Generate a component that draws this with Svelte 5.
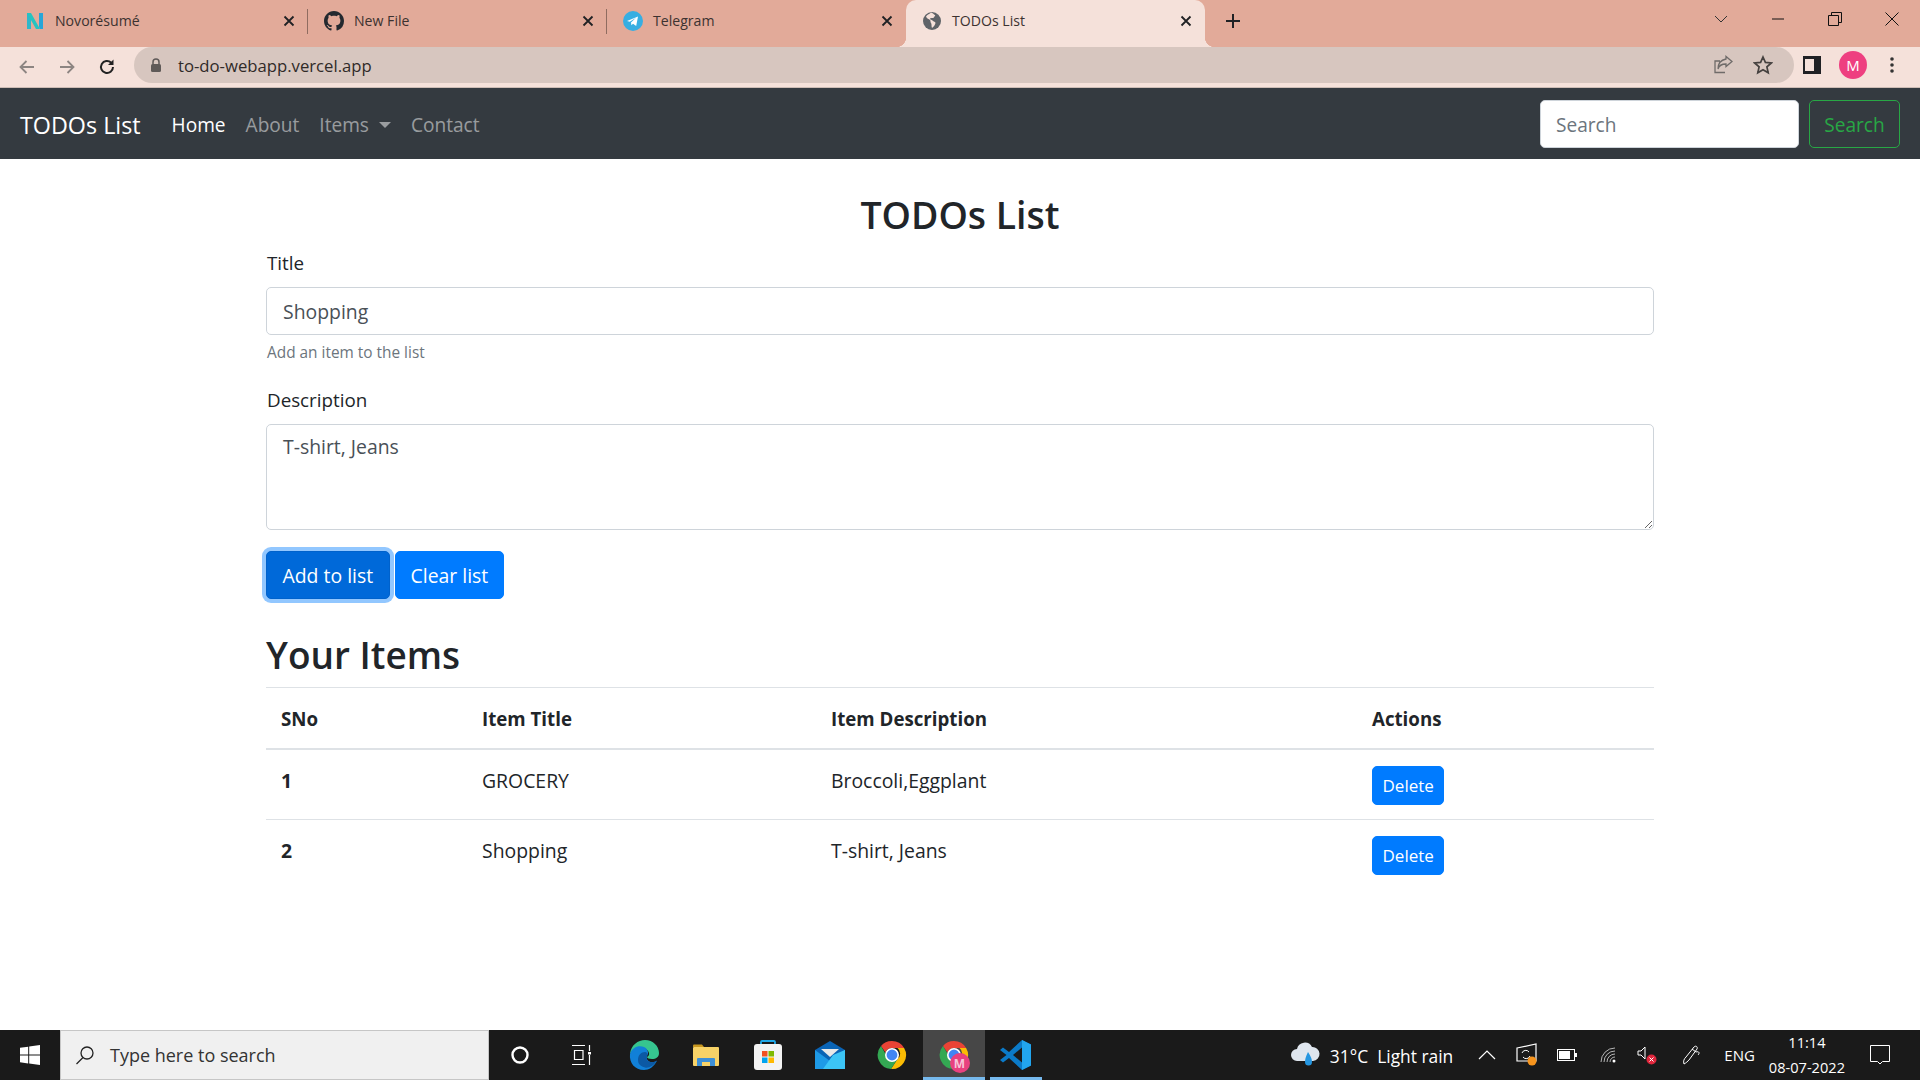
<script>
  const tabs = [
    { id: 'novo', title: 'Novorésumé' },
    { id: 'github', title: 'New File' },
    { id: 'telegram', title: 'Telegram' },
    { id: 'globe', title: 'TODOs List', active: true }
  ];
  const links = ['About'];
  const items = [
    { no: 1, title: 'GROCERY', desc: 'Broccoli,Eggplant' },
    { no: 2, title: 'Shopping', desc: 'T-shirt, Jeans' }
  ];
</script>

{#snippet chromeLogo()}
  <svg viewBox="0 0 32 32" width="32" height="32">
    <path d="M16 2a14 14 0 0 1 12.100 7H16a7 7 0 0 0-6.600 4.600L5 7A14 14 0 0 1 16 2z" fill="#ea4335" />
    <path d="M28.100 9A14 14 0 0 1 15 30l6.500-10a7 7 0 0 0 0-11z" fill="#fbbc04" />
    <path d="M5 7l6 10.500A7 7 0 0 0 21.500 20L15 30A14 14 0 0 1 5 7z" fill="#34a853" />
    <circle cx="16" cy="16" r="6.200" fill="#4285f4" stroke="#fff" stroke-width="1.600" />
  </svg>
{/snippet}

<div class="screen">
  <div class="tabstrip">
    {#each tabs as tab, i}
      <div class="tab" class:active={tab.active} class:sep={i < 2}>
        <span class="favicon">
          {#if tab.id === 'novo'}
            <svg viewBox="0 0 20 20" width="20" height="20"><path d="M2 2l4 0 0 16-4 0z" fill="#2fb7c9" /><path d="M2 2l4 0 9 16-4 0z" fill="#25c4c0" /><path d="M14 2l4 0 0 16-3 0-1-2z" fill="#27a6d8" /></svg>
          {:else if tab.id === 'github'}
            <svg viewBox="0 0 16 16" width="20" height="20"><path fill="#24292f" d="M8 0C3.580 0 0 3.580 0 8c0 3.540 2.290 6.530 5.470 7.590.4.070.55-.17.55-.38 0-.19-.01-.82-.01-1.490-2.010.37-2.530-.49-2.690-.94-.09-.23-.48-.94-.82-1.130-.28-.15-.68-.52-.01-.53.63-.01 1.080.58 1.230.82.72 1.210 1.870.87 2.330.66.070-.52.28-.87.51-1.070-1.780-.2-3.640-.89-3.640-3.950 0-.87.31-1.590.82-2.150-.08-.2-.36-1.020.08-2.120 0 0 .67-.21 2.200.82.64-.18 1.320-.27 2-.27s1.360.09 2 .27c1.530-1.040 2.200-.82 2.200-.82.44 1.100.16 1.920.08 2.120.51.56.82 1.270.82 2.150 0 3.070-1.870 3.750-3.650 3.950.29.25.54.73.54 1.480 0 1.070-.01 1.930-.01 2.200 0 .21.15.46.55.38A8 8 0 0 0 16 8c0-4.420-3.580-8-8-8z" /></svg>
          {:else if tab.id === 'telegram'}
            <svg viewBox="0 0 20 20" width="20" height="20"><circle cx="10" cy="10" r="10" fill="#37aee2" /><path d="M4 10l11-4.500-1.800 9.500-3.200-2.300-1.600 1.600-.4-2.900 5-4.600-6.200 3.900z" fill="#fff" /></svg>
          {:else}
            <svg viewBox="0 0 20 20" width="20" height="20"><circle cx="10" cy="10" r="9" fill="#5f6368" /><path d="M9 1.500c-1 1.500-4 2-5 4 .5 2 3 2.500 4 3.500s0 2 1 3 0 3 1 5c1.500-1 3-3 3.500-5 .2-1-2-1.500-3-2.500s-2-.5-2.500-1.500 2-1 3-1 1-1.500 2-2-1-2-4-3.500z" fill="#f5e1da" /></svg>
          {/if}
        </span>
        <span class="tab-title">{tab.title}</span>
        <svg class="tab-close" viewBox="0 0 12 12" width="12" height="12"><path d="M1.500 1.500l9 9M10.500 1.500l-9 9" stroke="#202124" stroke-width="1.800" /></svg>
      </div>
    {/each}
    <svg class="newtab" viewBox="0 0 16 16" width="16" height="16"><path d="M8 1v14M1 8h14" stroke="#202124" stroke-width="2" /></svg>
    <div class="winbtns">
      <svg viewBox="0 0 14 14" width="14" height="14"><path d="M1 4l6 6 6-6" fill="none" stroke="#333" stroke-width="1" /></svg>
      <svg viewBox="0 0 14 14" width="14" height="14"><path d="M1 7h12" stroke="#111" stroke-width="1" /></svg>
      <svg viewBox="0 0 14 14" width="14" height="14"><path d="M.5 3.500h10v10H.5zM3.500 3.500V.5h10v10h-3" fill="none" stroke="#111" stroke-width="1" /></svg>
      <svg viewBox="0 0 14 14" width="14" height="14"><path d="M.5.5l13 13M13.500.5l-13 13" stroke="#111" stroke-width="1" /></svg>
    </div>
  </div>

  <div class="toolbar">
    <svg class="tool" viewBox="0 0 18 18" width="18" height="18"><path d="M16 9H3M8.500 3L2.500 9l6 6" fill="none" stroke="#8d8582" stroke-width="1.800" /></svg>
    <svg class="tool" viewBox="0 0 18 18" width="18" height="18"><path d="M2 9h13M9.500 3l6 6-6 6" fill="none" stroke="#8d8582" stroke-width="1.800" /></svg>
    <svg class="tool" viewBox="0 0 18 18" width="18" height="18"><path d="M15 9a6 6 0 1 1-1.800-4.300" fill="none" stroke="#222" stroke-width="2" /><path d="M15.500 1.500v5.500H10z" fill="#222" /></svg>
    <div class="omnibox">
      <svg viewBox="0 0 12 14" width="12" height="14"><path d="M3 6V4a3 3 0 0 1 6 0v2" fill="none" stroke="#5f5a58" stroke-width="1.500" /><rect x="1" y="6" width="10" height="8" rx="1.500" fill="#5f5a58" /></svg>
      <span class="url">to-do-webapp.vercel.app</span>
      <svg class="share" viewBox="0 0 20 20" width="20" height="20"><path d="M13 4v-2.500l6 5-6 5V9c-4 0-7 1.500-8 5 0-5 3-9 8-10zM12 17.500H2V6h5" fill="none" stroke="#6f6b69" stroke-width="1.300" /></svg>
      <svg class="star" viewBox="0 0 20 20" width="20" height="20"><path d="M10 2l2.400 5.400 5.900.6-4.400 3.900 1.300 5.800L10 14.700l-5.200 3 1.300-5.800L1.700 8l5.900-.6z" fill="none" stroke="#45413f" stroke-width="1.700" /></svg>
    </div>
    <svg class="side" viewBox="0 0 18 18" width="18" height="18"><rect width="18" height="18" fill="#202124" /><rect x="2" y="3" width="9" height="12" fill="#f5e1da" /></svg>
    <span class="avatar">M</span>
    <svg class="menu" viewBox="0 0 4 18" width="4" height="18"><circle cx="2" cy="3" r="1.800" fill="#333" /><circle cx="2" cy="9" r="1.800" fill="#333" /><circle cx="2" cy="15" r="1.800" fill="#333" /></svg>
  </div>

  <nav class="navbar">
    <span class="brand">TODOs List</span>
    <span class="nav-link current">Home</span>
    {#each links as link}
      <span class="nav-link">{link}</span>
    {/each}
    <span class="nav-link">Items<i class="caret"></i></span>
    <span class="nav-link">Contact</span>
    <form class="nav-search">
      <input class="search-input" placeholder="Search" />
      <button type="button" class="btn-outline">Search</button>
    </form>
  </nav>

  <main class="container">
    <h2 class="page-title">TODOs List</h2>
    <label class="label" for="title">Title</label>
    <input id="title" class="control" value="Shopping" />
    <small class="hint">Add an item to the list</small>
    <label class="label desc-label" for="desc">Description</label>
    <textarea id="desc" class="control area" value="T-shirt, Jeans"></textarea>
    <div class="actions">
      <button type="button" class="btn focus">Add to list</button>
      <button type="button" class="btn">Clear list</button>
    </div>
    <h2 class="items-title">Your Items</h2>
    <table>
      <thead>
        <tr><th class="c1">SNo</th><th class="c2">Item Title</th><th class="c3">Item Description</th><th>Actions</th></tr>
      </thead>
      <tbody>
        {#each items as item}
          <tr>
            <th>{item.no}</th>
            <td>{item.title}</td>
            <td>{item.desc}</td>
            <td><button type="button" class="btn small">Delete</button></td>
          </tr>
        {/each}
      </tbody>
    </table>
  </main>

  <footer class="taskbar">
    <div class="start">
      <svg viewBox="0 0 20 20" width="20" height="20"><path d="M0 2.800l8.200-1.100v7.900H0zM9.200 1.500L20 0v9.600H9.200zM0 10.500h8.200v7.900L0 17.200zM9.200 10.500H20V20L9.200 18.500z" fill="#fff" /></svg>
    </div>
    <div class="task-search">
      <svg viewBox="0 0 20 20" width="20" height="20"><circle cx="12" cy="8" r="6" fill="none" stroke="#222" stroke-width="1.300" /><path d="M8 12.500L1.500 19" stroke="#222" stroke-width="1.300" /></svg>
      <span>Type here to search</span>
    </div>
    <div class="slot">
      <svg viewBox="0 0 20 20" width="20" height="20"><circle cx="10" cy="10" r="7.500" fill="none" stroke="#fff" stroke-width="2.400" /></svg>
    </div>
    <div class="slot">
      <svg viewBox="0 0 22 22" width="22" height="22"><path d="M1 1.500h13M1 20.500h13M3.500 6.500h8.500v9H3.500zM18.500 1v6M18.500 11v10" fill="none" stroke="#fff" stroke-width="1.200" /><rect x="17" y="8" width="3" height="2.500" fill="#fff" /></svg>
    </div>
    <div class="slot">
      <svg viewBox="0 0 32 32" width="32" height="32">
        <path d="M2 15C3 6 10 1 17 1c8 0 14 6 14 13 0 4-3 6-7 6-3 0-5-1-5-2 2-1 3-3 1-6C17 7 8 6 2 15z" fill="#36c58f" />
        <path d="M2 15C4 8 11 6 16 8c4 2 5 6 3 9-1 2 0 4 2 5.500 3 1.500 6 .5 8-1C26 28 21 31 16 31 7 31 1 24 2 15z" fill="#1180d8" />
        <path d="M10 21c0-5 3-8 7-8 2 0 3 2 2 4-1 3 0 5 2 5.500 3 1.500 6 .5 8-1-3 5-8 8-12 7-4-1-7-3-7-7.500z" fill="#0c59a4" />
      </svg>
    </div>
    <div class="slot">
      <svg viewBox="0 0 28 24" width="28" height="24"><path d="M1 2.500q0-1 1-1h8l2 2.500h-11z" fill="#c8971f" /><rect x="1" y="4" width="26" height="19" rx="1" fill="#f7d267" /><path d="M5 23v-7q0-1 1-1h16q1 0 1 1v7h-5v-4h-8v4z" fill="#3d8fd6" /></svg>
    </div>
    <div class="slot">
      <svg viewBox="0 0 30 32" width="30" height="32"><path d="M8 7V3q0-1 1-1h12q1 0 1 1v4" fill="none" stroke="#1fa8e8" stroke-width="1.800" /><rect x="1" y="5" width="28" height="26" rx="3" fill="#f3f3f3" /><rect x="9" y="12" width="5.500" height="5.500" fill="#f25022" /><rect x="15.500" y="12" width="5.500" height="5.500" fill="#7fba00" /><rect x="9" y="18.500" width="5.500" height="5.500" fill="#00a4ef" /><rect x="15.500" y="18.500" width="5.500" height="5.500" fill="#ffb900" /></svg>
    </div>
    <div class="slot">
      <svg viewBox="0 0 30 28" width="30" height="28"><path d="M0 9L15 0l15 9v19H0z" fill="#0a64b5" /><path d="M6 8h18l-9 8z" fill="#e8e8e8" /><path d="M0 9l15 11L30 9v19H0z" fill="#1e9ae6" /><path d="M30 9v19H8l10-14z" fill="#3cc5f6" /></svg>
    </div>
    <div class="slot">{@render chromeLogo()}</div>
    <div class="slot running">
      {@render chromeLogo()}
      <span class="badge">M</span>
    </div>
    <div class="slot underlined">
      <svg viewBox="0 0 32 32" width="32" height="32"><path d="M22 1l9 4.500v21L22 31 9 19l-6 4.500L0 21l6.500-5L0 11l3-2.500L9 13z" fill="#0b7ac8" /><path d="M22 1l9 4.500v21L22 31z" fill="#22a5ee" /><path d="M22 8.500L13 16l9 7.500z" fill="#1a1a1a" /></svg>
    </div>
    <div class="tray">
      <svg class="cloud" viewBox="0 0 30 30" width="30" height="30"><path d="M7 21a6 6 0 0 1 0-12 8 8 0 0 1 15-2 7 7 0 0 1 1 14z" fill="#dfe6ee" /><path d="M18 12q4 6 4 10a3.500 3.500 0 0 1-7 0q0-4 3-10z" fill="#2596e0" /></svg>
      <span class="weather">31°C&nbsp; Light rain</span>
      <svg class="t-chev" viewBox="0 0 18 10" width="18" height="10"><path d="M1 9l8-8 8 8" fill="none" stroke="#fff" stroke-width="1.200" /></svg>
      <svg class="t-sync" viewBox="0 0 22 24" width="22" height="24"><path d="M1 5l19-4v17H1z" fill="none" stroke="#fff" stroke-width="1.200" /><path d="M6 10a4 4 0 0 1 7-1M14 13a4 4 0 0 1-7 1" fill="none" stroke="#fff" /><circle cx="16" cy="18" r="4.500" fill="#f7941d" /></svg>
      <svg class="t-batt" viewBox="0 0 20 12" width="20" height="12"><rect x=".5" y=".5" width="17" height="11" fill="none" stroke="#fff" /><rect x="2" y="2" width="11" height="8" fill="#fff" /><rect x="18" y="4" width="2" height="4" fill="#fff" /></svg>
      <svg class="t-wifi" viewBox="0 0 16 16" width="16" height="16"><path d="M1 15A14 14 0 0 1 15 1M4 15A11 11 0 0 1 15 4M7 15a8 8 0 0 1 8-8M10 15a5 5 0 0 1 5-5" fill="none" stroke="#ddd" stroke-width=".8" /><circle cx="14" cy="14" r="1.500" fill="#fff" /></svg>
      <svg class="t-vol" viewBox="0 0 20 20" width="20" height="20"><path d="M1 6h3l4-4v12l-4-4H1z" fill="none" stroke="#fff" /><circle cx="14.500" cy="14.500" r="5" fill="#e0263c" /><path d="M12.500 12.500l4 4M16.500 12.500l-4 4" stroke="#fff" /></svg>
      <svg class="t-pen" viewBox="0 0 20 22" width="20" height="22"><path d="M2 20c-1-3 0-5 2-7l8-10c2-2 4 0 3 2l-8 11c-1 1-3 3-5 4zM10 5l4 3c3-1 4 1 2 3" fill="none" stroke="#fff" stroke-width="1" /></svg>
      <span class="lang">ENG</span>
      <span class="clock"><span>11:14</span><span>08-07-2022</span></span>
      <svg class="t-note" viewBox="0 0 20 20" width="20" height="20"><path d="M.5.5h19v16h-7l-2.500 2.500-2.500-2.500h-7z" fill="none" stroke="#fff" /></svg>
    </div>
  </footer>
</div>

<style>
  :global(body) {
    margin: 0;
    background: #fff;
  }

  .screen {
    width: 1920px;
    height: 1080px;
    overflow: hidden;
    display: flex;
    flex-direction: column;
    font-family: "Open Sans", "Noto Sans", sans-serif;
    color: #212529;
  }

  /* browser chrome */
  .tabstrip {
    flex: 0 0 47px;
    background: #e2aa99;
    display: flex;
    align-items: stretch;
    padding-left: 9px;
  }

  .tab {
    width: 299px;
    box-sizing: border-box;
    display: flex;
    align-items: center;
    padding: 0 13px 6px 16px;
    font-size: 14.1px;
    color: #3c3230;
    position: relative;
  }

  .tab.active {
    background: #f5e1da;
    border-radius: 10px 10px 0 0;
    color: #3c3230;
  }

  .tab.active::before,
  .tab.active::after {
    content: '';
    position: absolute;
    bottom: 0;
    width: 10px;
    height: 10px;
  }

  .tab.active::before {
    left: -10px;
    background: radial-gradient(circle at 0 0, transparent 10px, #f5e1da 10.5px);
  }

  .tab.active::after {
    right: -10px;
    background: radial-gradient(circle at 100% 0, transparent 10px, #f5e1da 10.5px);
  }

  .tab.sep::after {
    content: '';
    position: absolute;
    right: 0;
    top: 9px;
    height: 25px;
    width: 1px;
    background: #8f6c60;
  }

  .favicon {
    width: 20px;
    height: 20px;
    margin-right: 10px;
    display: block;
  }

  .favicon svg,
  .slot svg {
    display: block;
  }

  .tab-title {
    flex: 1;
  }

  .newtab {
    align-self: center;
    margin: -5px 0 0 20px;
  }

  .winbtns {
    margin-left: auto;
    display: flex;
    align-items: center;
    padding: 0 21px 10px 0;
    gap: 43px;
  }

  .toolbar {
    flex: 0 0 41px;
    box-sizing: border-box;
    background: #f5e1da;
    display: flex;
    align-items: flex-start;
    padding-left: 18px;
    border-bottom: 1px solid #cdbcb5;
  }

  .tool {
    margin: 11px 22px 0 0;
  }

  .omnibox {
    margin-left: -4px;
    width: 1660px;
    height: 36px;
    background: #d7c6bf;
    border-radius: 18px;
    display: flex;
    align-items: center;
    padding: 0 21px 0 16px;
    box-sizing: border-box;
  }

  .url {
    font-size: 16.7px;
    margin-left: 16px;
    flex: 1;
    color: #302a28;
  }

  .star {
    margin-left: 20px;
  }

  .side {
    margin: 9px 0 0 9px;
  }

  .avatar {
    width: 28px;
    height: 28px;
    border-radius: 50%;
    background: #ee3f80;
    color: #fff;
    font-size: 15px;
    display: flex;
    align-items: center;
    justify-content: center;
    margin: 4px 0 0 18px;
  }

  .menu {
    margin: 9px 0 0 23px;
  }

  .navbar {
    flex: 0 0 71px;
    box-sizing: border-box;
    background: #343a40;
    display: flex;
    align-items: center;
    padding: 0 20px;
    font-size: 19.1px;
  }

  .brand {
    color: #fff;
    font-size: 23.3px;
    margin: 2px 21px 0 0;
  }

  .nav-link {
    color: rgba(255, 255, 255, 0.5);
    padding: 2px 10px 0;
  }

  .nav-link.current {
    color: #fff;
  }

  .caret {
    display: inline-block;
    margin-left: 10px;
    vertical-align: 4px;
    border-top: 6px solid;
    border-left: 6px solid transparent;
    border-right: 6px solid transparent;
  }

  .nav-search {
    margin-left: auto;
    display: flex;
    gap: 10px;
  }

  .search-input {
    width: 259px;
    height: 48px;
    box-sizing: border-box;
    border: 1px solid #ced4da;
    border-radius: 5px;
    padding: 3px 15px 0;
    font: inherit;
    color: #495057;
  }

  .search-input::placeholder {
    color: #6c757d;
  }

  .btn-outline {
    width: 91px;
    height: 48px;
    background: transparent;
    border: 1px solid #28a745;
    border-radius: 5px;
    color: #28a745;
    font: inherit;
    padding: 2px 0 0;
  }

  /* page body */
  .container {
    flex: 1;
    width: 1388px;
    margin: 0 auto;
    box-sizing: border-box;
    padding-top: 32px;
    font-size: 19.4px;
  }

  .page-title {
    margin: 0 0 9px;
    text-align: center;
    font-size: 37.4px;
    font-weight: 600;
    line-height: 48px;
  }

  .label {
    display: block;
    font-size: 18.8px;
    line-height: 30px;
    margin: 0 0 9px 1px;
  }

  .control {
    display: block;
    width: 100%;
    height: 48px;
    box-sizing: border-box;
    border: 1px solid #ced4da;
    border-radius: 5px;
    padding: 7px 16px;
    font: inherit;
    color: #495057;
    background: #fff;
  }

  .area {
    height: 106px;
    line-height: 30px;
    resize: vertical;
  }

  .hint {
    display: block;
    margin: 6px 0 0 1px;
    font-size: 15.4px;
    line-height: 24px;
    color: #6c757d;
  }

  .desc-label {
    margin-top: 20px;
  }

  .actions {
    display: flex;
    gap: 5px;
    margin-top: 21px;
  }

  .btn {
    height: 48px;
    padding: 0 15px;
    border: 1px solid #007bff;
    border-radius: 5px;
    background: #007bff;
    color: #fff;
    font: inherit;
    white-space: nowrap;
  }

  .btn.focus {
    background: #0069d9;
    border-color: #0062cc;
    padding: 0 15.5px;
    box-shadow: 0 0 0 4px rgba(38, 143, 255, 0.5);
  }

  .btn.small {
    height: 39px;
    padding: 0 9.5px;
    font-size: 17px;
    display: block;
  }

  .items-title {
    margin: 32px 0 8px;
    font-size: 37px;
    font-weight: 600;
    line-height: 48px;
  }

  table {
    width: 100%;
    border-collapse: collapse;
    table-layout: fixed;
  }

  th,
  td {
    text-align: left;
    padding: 16px 15px 14px;
    border-top: 1px solid #dee2e6;
    font-weight: 400;
    vertical-align: top;
    line-height: 30px;
  }

  th {
    font-weight: 700;
  }

  thead th {
    font-size: 18.7px;
    border-bottom: 2px solid #dee2e6;
  }

  .c1 {
    width: 171px;
  }

  .c2 {
    width: 319px;
  }

  .c3 {
    width: 511px;
  }

  /* windows taskbar */
  .taskbar {
    flex: 0 0 50px;
    background: #1a1a1a;
    display: flex;
    align-items: center;
    color: #fff;
  }

  .start {
    width: 60px;
    display: flex;
    justify-content: center;
  }

  .task-search {
    width: 428.5px;
    height: 50px;
    box-sizing: border-box;
    background: #f0f0f0;
    border: 1px solid #c6c6c6;
    display: flex;
    align-items: center;
    padding-left: 14px;
    gap: 15px;
    font-size: 18px;
    color: #333;
  }

  .slot {
    width: 62px;
    height: 50px;
    display: flex;
    align-items: center;
    justify-content: center;
    position: relative;
    flex: none;
  }

  .running {
    background: #474747;
  }

  .running::after,
  .underlined::after {
    content: '';
    position: absolute;
    left: 0;
    right: 0;
    bottom: 0;
    height: 3px;
    background: #76b9ed;
  }

  .underlined::after {
    left: 5px;
    right: 5px;
  }

  .badge {
    position: absolute;
    left: 27px;
    top: 23px;
    width: 20px;
    height: 20px;
    border-radius: 50%;
    background: #e8417f;
    color: #f7c6d9;
    font-size: 12px;
    font-weight: 700;
    display: flex;
    align-items: center;
    justify-content: center;
  }

  .tray {
    margin-left: auto;
    display: flex;
    align-items: center;
    height: 50px;
    padding-right: 30px;
  }

  .weather {
    font-size: 17.4px;
    margin: 2px 0 0 10px;
    white-space: nowrap;
  }

  .t-chev {
    margin-left: 25px;
  }

  .t-sync {
    margin-left: 20px;
  }

  .t-batt {
    margin-left: 19px;
  }

  .t-wifi {
    margin-left: 23px;
  }

  .t-vol {
    margin-left: 21px;
  }

  .t-pen {
    margin-left: 25px;
  }

  .lang {
    font-size: 15px;
    margin-left: 22px;
  }

  .clock {
    display: flex;
    flex-direction: column;
    align-items: center;
    font-size: 14.6px;
    line-height: 25px;
    margin-left: 14px;
  }

  .t-note {
    margin-left: 25px;
  }
</style>
